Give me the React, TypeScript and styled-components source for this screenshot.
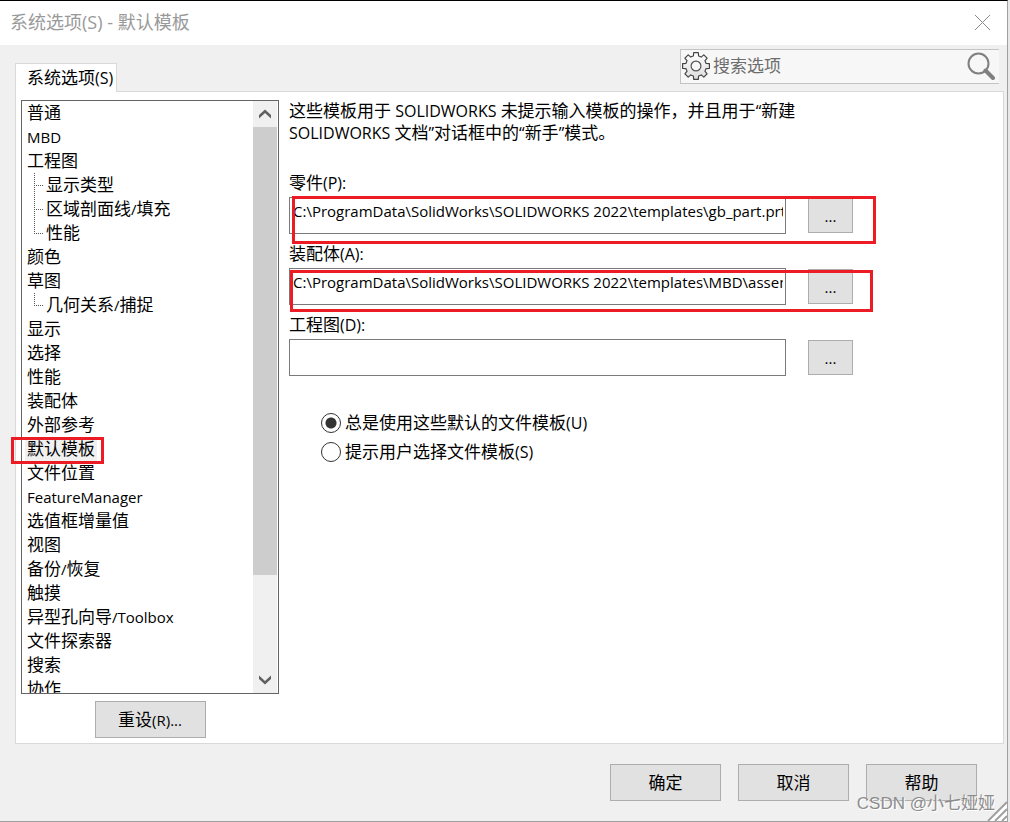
import React, { useState } from "react";
import styled, { createGlobalStyle } from "styled-components";

const GlobalStyle = createGlobalStyle`
  * { box-sizing: border-box; }
  body {
    margin: 0;
    background: #e8e8e8;
    color: #000;
    font-family: "Open Sans", "Noto Sans CJK SC", sans-serif;
    font-size: 17px;
    line-height: 24px;
  }
  button, input { font: inherit; color: inherit; }
`;

const Latin = styled.span<{ $small?: boolean }>`
  font-size: ${(p) => (p.$small ? 15 : 16)}px;
`;

/* Latin runs are set slightly smaller than the Chinese characters around them. */
function Mixed({ children, small }: { children: string; small?: boolean }) {
  return (
    <>
      {children.split(/([\x20-\x7e“”]+)/).map((part, i) =>
        i % 2 ? <Latin key={i} $small={small}>{part}</Latin> : part
      )}
    </>
  );
}

const Dialog = styled.main`
  position: relative;
  display: flex;
  flex-direction: column;
  height: 100vh;
  min-height: 560px;
  margin-right: 2px;
  border: 1px solid #a0a0a0;
  border-top-color: #000;
  border-left: 0;
  background: #f0f0f0;
`;

const TitleBar = styled.header`
  display: flex;
  flex: none;
  align-items: center;
  justify-content: space-between;
  height: 44px;
  padding: 0 16px 2px 10px;
  background: #fff;
`;

const Title = styled.h1`
  margin: 0;
  color: #999;
  font-size: 18px;
  font-weight: 400;
`;

const CloseButton = styled.button`
  display: flex;
  padding: 0;
  border: 0;
  background: none;
`;

const TopStrip = styled.div`
  display: flex;
  flex: none;
  align-items: flex-end;
  justify-content: space-between;
  height: 46px;
  padding: 0 8px 0 15px;
`;

const Tab = styled.button`
  position: relative;
  z-index: 1;
  height: 29px;
  margin-bottom: -1px;
  padding: 0 3px 0 11px;
  border: 1px solid #d9d9d9;
  border-bottom: 0;
  background: #fff;
  line-height: 26px;
  white-space: nowrap;
`;

const SearchBox = styled.label`
  display: flex;
  align-items: center;
  width: 319px;
  height: 35px;
  margin-bottom: 7px;
  padding: 0 4px 2px 1px;
  border: 1px solid #c4c4c4;
  border-right: 0;
  background: #f7f7f7;
`;

const SearchInput = styled.input`
  flex: 1;
  min-width: 0;
  padding: 0 3px;
  border: 0;
  outline: 0;
  background: none;
  &::placeholder { color: #6d6d6d; opacity: 1; }
`;

const Panel = styled.section`
  display: flex;
  flex: 1;
  gap: 10px;
  min-height: 0;
  margin: 0 3px 0 15px;
  padding: 8px 0 5px 5px;
  border: 1px solid #d9d9d9;
  background: #fff;
`;

const Sidebar = styled.div`
  position: relative;
  display: flex;
  flex: none;
  flex-direction: column;
  align-items: center;
  gap: 7px;
  width: 258px;
`;

const TreeFrame = styled.div`
  display: flex;
  flex: 1;
  width: 100%;
  min-height: 0;
  padding-right: 1px;
  border: 1px solid #646464;
`;

const Tree = styled.ul`
  flex: 1;
  margin: 0;
  padding: 0 0 0 3px;
  overflow: hidden;
  list-style: none;
`;

const TreeRow = styled.li<{ $child?: boolean }>`
  display: flex;
  height: 24px;
  padding-left: ${(p) => (p.$child ? 9 : 0)}px;
`;

const TreeItem = styled.button<{ $selected?: boolean }>`
  padding: 0 2px;
  border: 0;
  background: ${(p) => (p.$selected ? "#f0f0f0" : "none")};
  line-height: 24px;
  white-space: nowrap;
`;

const ScrollBar = styled.div`
  display: flex;
  flex: none;
  flex-direction: column;
  width: 24px;
  background: #f0f0f0;
`;

const ScrollButton = styled.button`
  display: flex;
  flex: none;
  align-items: center;
  justify-content: center;
  height: 26px;
  padding: 0;
  border: 0;
  background: none;
`;

const ScrollTrack = styled.div`
  flex: 1;
`;

const ScrollThumb = styled.div`
  height: 83%;
  background: #cdcdcd;
`;

const PushButton = styled.button`
  flex: none;
  width: 111px;
  height: 37px;
  padding: 0;
  border: 1px solid #adadad;
  background: #e1e1e1;
`;

const Form = styled.form`
  flex: 1;
  min-width: 0;
  padding-right: 150px;
`;

const Intro = styled.p`
  margin: 0 0 27px;
  line-height: 21px;
`;

const Field = styled.div`
  position: relative;
  margin-bottom: 8px;
`;

const FieldLabel = styled.label`
  display: block;
  width: fit-content;
  height: 26px;
`;

const FieldRow = styled.div`
  display: flex;
  align-items: center;
  gap: 22px;
`;

const PathInput = styled.input`
  flex: 1;
  min-width: 0;
  height: 37px;
  padding: 0 2px 10px 3px;
  border: 1px solid #7a7a7a;
  border-radius: 0;
  outline: 0;
  background: #fff;
  font-size: 15px;
`;

const BrowseButton = styled(PushButton)`
  width: 45px;
  height: 35px;
  font-size: 15px;
`;

const Choices = styled.fieldset`
  display: flex;
  flex-direction: column;
  gap: 5px;
  margin: 35px 0 0 32px;
  padding: 0;
  border: 0;
`;

const Choice = styled.label`
  display: flex;
  align-items: center;
  gap: 4px;
`;

const Radio = styled.input`
  appearance: none;
  width: 20px;
  height: 20px;
  margin: 0;
  border: 1px solid #333;
  border-radius: 50%;
  background: #fff;
  &:checked { background: radial-gradient(circle, #333 5px, #fff 6px); }
`;

const Footer = styled.footer`
  display: flex;
  flex: none;
  gap: 17px;
  justify-content: flex-end;
  padding: 20px 30px;
`;

/* Red annotation frame over a control. */
const Mark = styled.span<{ $inset: string }>`
  position: absolute;
  z-index: 2;
  inset: ${(p) => p.$inset};
  min-height: 27px;
  border: 3px solid #ed1c24;
  pointer-events: none;
`;

const Watermark = styled.span`
  position: absolute;
  right: 12px;
  bottom: 5px;
  color: #8c8c8c;
  font-family: "Liberation Sans", "Noto Sans CJK SC", sans-serif;
  text-shadow: 1px 1px 0 #fff;
  pointer-events: none;
`;

const Grip = styled.svg`
  position: absolute;
  right: 0;
  bottom: 0;
`;

function Connector({ last }: { last?: boolean }) {
  return (
    <svg width="10" height="24" aria-hidden="true" stroke="#555" strokeDasharray="1 1">
      <path d={last ? "M.5 0V13" : "M.5 0V24"} />
      <path d="M0 12.5H10" />
    </svg>
  );
}

function Chevron({ down }: { down?: boolean }) {
  return (
    <svg width="12" height="10" viewBox="0 0 12 10" fill="#606060" aria-hidden="true">
      <path d={down ? "M0 .5V4L6 9.5L12 4V.5L6 6Z" : "M0 9.5V6L6 .5L12 6V9.5L6 4Z"} />
    </svg>
  );
}

function GearIcon() {
  const tooth =
    "M-2.6 -10 L-2.3 -13.4 H2.3 L2.6 -10 C4 -9.6 4.5 -9.3 5.2 -8.9 L7.8 -11.1 L11.1 -7.8 L8.9 -5.2";
  const half =
    "C9.4 -4.4 9.7 -3.5 10 -2.6 L13.4 -2.3 V2.3 L10 2.6 C9.7 3.5 9.4 4.4 8.9 5.2 L11.1 7.8 L7.8 11.1 L5.2 8.9 C4.4 9.4 3.5 9.7 2.6 10 L2.3 13.4 H-2.3 L-2.6 10 C-3.5 9.7 -4.4 9.4 -5.2 8.9 L-7.8 11.1 L-11.1 7.8 L-8.9 5.2 C-9.4 4.4 -9.7 3.5 -10 2.6 L-13.4 2.3 V-2.3 L-10 -2.6 C-9.7 -3.5 -9.4 -4.4 -8.9 -5.2 L-11.1 -7.8 L-7.8 -11.1 L-5.2 -8.9 C-4.4 -9.4 -3.5 -9.7 -2.6 -10 Z";
  return (
    <svg width="28" height="28" viewBox="-14 -14 28 28" aria-hidden="true">
      <defs>
        <linearGradient id="gear" x1="0" y1="0" x2="0" y2="1">
          <stop offset="0" stopColor="#fff" />
          <stop offset="1" stopColor="#dcdcdc" />
        </linearGradient>
      </defs>
      <path d={`${tooth} ${half}`} fill="url(#gear)" stroke="#444" strokeWidth="1.2" strokeLinejoin="round" />
      <circle r="4.9" fill="#f7f7f7" stroke="#555" strokeWidth="1.2" />
    </svg>
  );
}

function SearchIcon() {
  return (
    <svg width="28" height="28" viewBox="0 0 28 28" fill="none" stroke="#808080" aria-hidden="true">
      <circle cx="11.5" cy="11.5" r="10" strokeWidth="2" />
      <path d="M18.5 18.5L26 26" strokeWidth="4" strokeLinecap="round" />
    </svg>
  );
}

type Node = { name: string; child?: boolean; last?: boolean };

const nodes: Node[] = [
  { name: "普通" },
  { name: "MBD" },
  { name: "工程图" },
  { name: "显示类型", child: true },
  { name: "区域剖面线/填充", child: true },
  { name: "性能", child: true, last: true },
  { name: "颜色" },
  { name: "草图" },
  { name: "几何关系/捕捉", child: true, last: true },
  { name: "显示" },
  { name: "选择" },
  { name: "性能" },
  { name: "装配体" },
  { name: "外部参考" },
  { name: "默认模板" },
  { name: "文件位置" },
  { name: "FeatureManager" },
  { name: "选值框增量值" },
  { name: "视图" },
  { name: "备份/恢复" },
  { name: "触摸" },
  { name: "异型孔向导/Toolbox" },
  { name: "文件探索器" },
  { name: "搜索" },
  { name: "协作" },
];

const root = "C:\\ProgramData\\SolidWorks\\SOLIDWORKS 2022\\templates\\";

const fields = [
  { id: "part", label: "零件(P):", value: root + "gb_part.prtdot", mark: "25px -23px -10px 3px" },
  { id: "assembly", label: "装配体(A):", value: root + "MBD\\assembly 0051mm to 0250mm.asmdot", mark: "28px -20px -7px 1px" },
  { id: "drawing", label: "工程图(D):", value: "" },
];

const choices = ["总是使用这些默认的文件模板(U)", "提示用户选择文件模板(S)"];

export default function App() {
  const [selected, setSelected] = useState(14);
  const [choice, setChoice] = useState(0);

  return (
    <>
      <GlobalStyle />
      <Dialog>
        <TitleBar>
          <Title>系统选项(S) - 默认模板</Title>
          <CloseButton aria-label="关闭">
            <svg width="17" height="17" stroke="#8a8a8a" aria-hidden="true">
              <path d="M1 1L16 16M16 1L1 16" />
            </svg>
          </CloseButton>
        </TitleBar>

        <TopStrip>
          <Tab><Mixed>系统选项(S)</Mixed></Tab>
          <SearchBox>
            <GearIcon />
            <SearchInput aria-label="搜索选项" placeholder="搜索选项" />
            <SearchIcon />
          </SearchBox>
        </TopStrip>

        <Panel>
          <Sidebar>
            <TreeFrame>
              <Tree>
                {nodes.map((node, i) => (
                  <TreeRow key={i} $child={node.child}>
                    {node.child && <Connector last={node.last} />}
                    <TreeItem $selected={i === selected} onClick={() => setSelected(i)}>
                      <Mixed small>{node.name}</Mixed>
                    </TreeItem>
                  </TreeRow>
                ))}
              </Tree>
              <ScrollBar>
                <ScrollButton aria-label="向上滚动"><Chevron /></ScrollButton>
                <ScrollTrack><ScrollThumb /></ScrollTrack>
                <ScrollButton aria-label="向下滚动"><Chevron down /></ScrollButton>
              </ScrollBar>
            </TreeFrame>
            <PushButton><Mixed small>重设(R)...</Mixed></PushButton>
            <Mark $inset="337px 175px auto -10px" />
          </Sidebar>

          <Form>
            <Intro>
              <Mixed>这些模板用于 SOLIDWORKS 未提示输入模板的操作，并且用于“新建 SOLIDWORKS 文档”对话框中的“新手”模式。</Mixed>
            </Intro>
            {fields.map((field) => (
              <Field key={field.id}>
                <FieldLabel htmlFor={field.id}><Mixed>{field.label}</Mixed></FieldLabel>
                <FieldRow>
                  <PathInput id={field.id} defaultValue={field.value} />
                  <BrowseButton type="button">...</BrowseButton>
                </FieldRow>
                {field.mark && <Mark $inset={field.mark} />}
              </Field>
            ))}
            <Choices>
              {choices.map((text, i) => (
                <Choice key={text}>
                  <Radio type="radio" name="template" checked={choice === i} onChange={() => setChoice(i)} />
                  <span><Mixed>{text}</Mixed></span>
                </Choice>
              ))}
            </Choices>
          </Form>
        </Panel>

        <Footer>
          <PushButton>确定</PushButton>
          <PushButton>取消</PushButton>
          <PushButton>帮助</PushButton>
        </Footer>

        <Watermark>CSDN @小七娅娅</Watermark>
        <Grip width="20" height="20" aria-hidden="true">
          <path d="M0 20L20 0V20Z" fill="#fff" />
          <path d="M1 20L20 1M8 20L20 8M15 20L20 15" stroke="#a0a0a0" strokeWidth="2" />
        </Grip>
      </Dialog>
    </>
  );
}
